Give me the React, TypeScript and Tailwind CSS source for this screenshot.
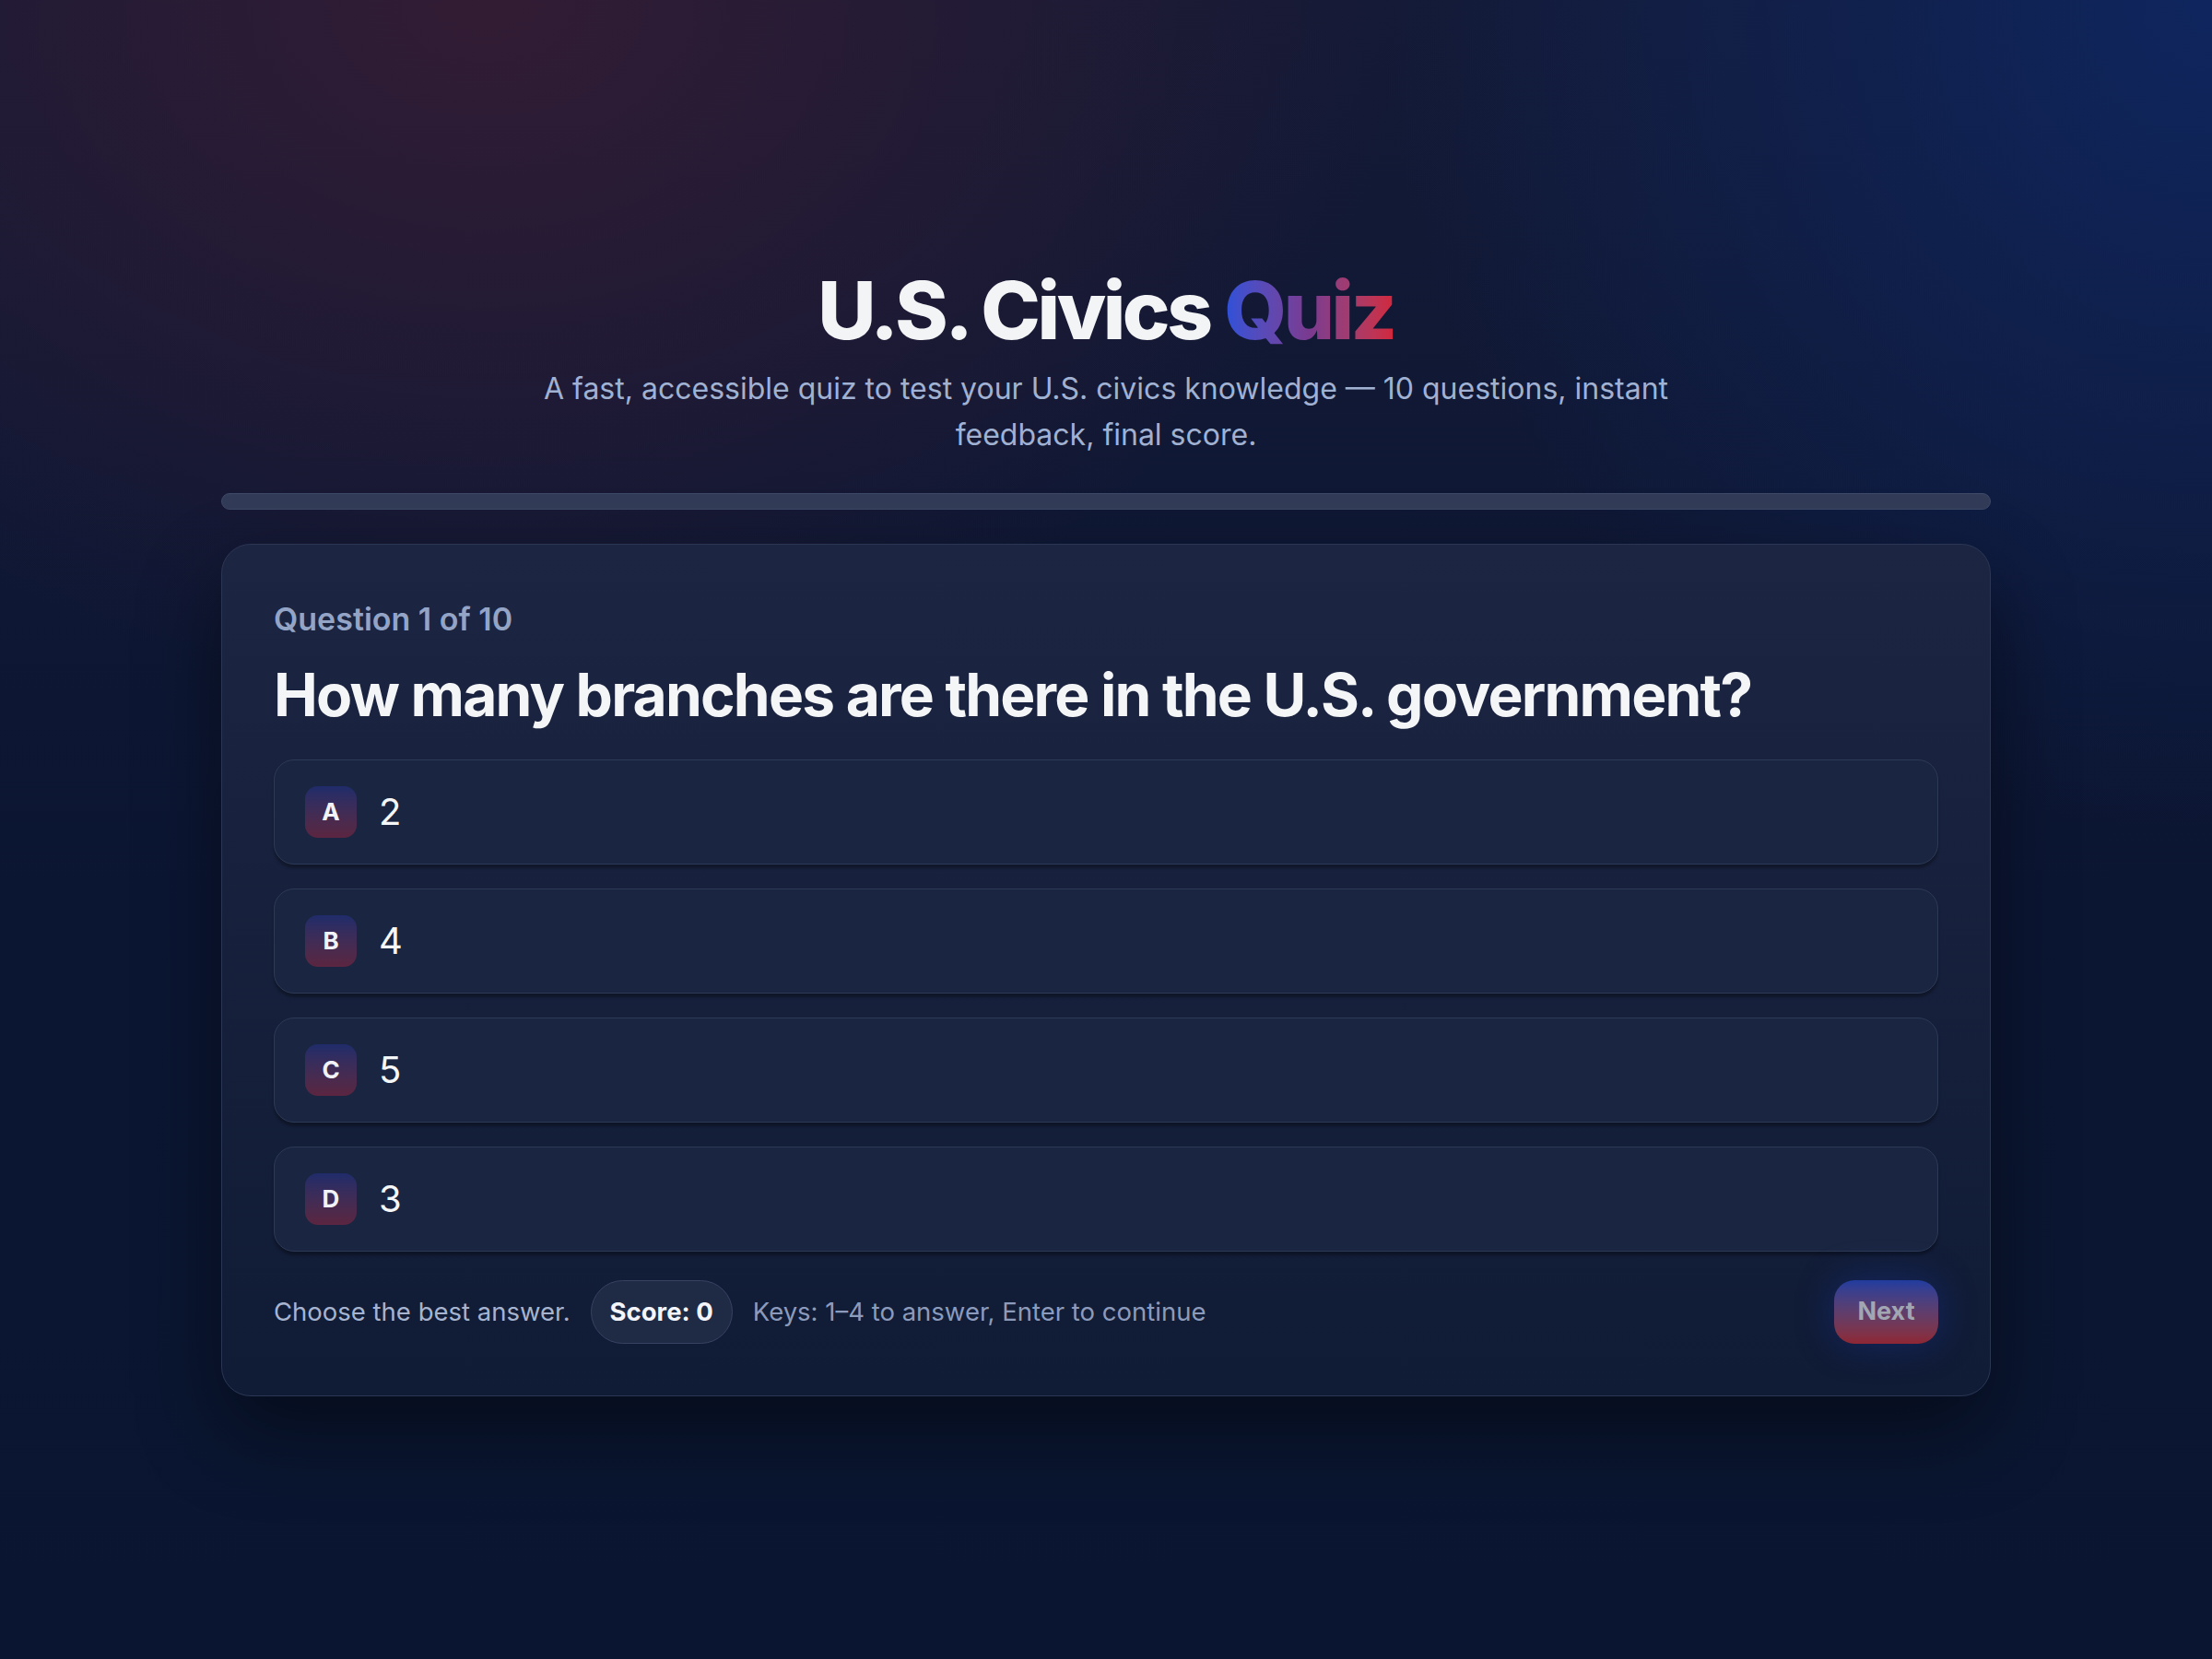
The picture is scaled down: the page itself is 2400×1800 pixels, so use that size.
import React from "react";

const options = [
  { k: "A", v: "2" },
  { k: "B", v: "4" },
  { k: "C", v: "5" },
  { k: "D", v: "3" },
];

export default function App() {
  return (
    <div
      className="min-h-screen w-full bg-[radial-gradient(ellipse_1000px_750px_at_22%_0%,rgba(52,28,52,0.95),rgba(52,28,52,0)_100%),radial-gradient(ellipse_900px_900px_at_100%_0%,rgba(14,38,96,0.95),rgba(14,38,96,0)_100%),linear-gradient(180deg,#141a36_0%,#0b1633_55%,#0a1631_100%)]"
      style={{ fontFamily: "Inter, 'Noto Sans', sans-serif" }}
    >
      <div className="mx-auto w-[1920px] pt-[289px] pb-[200px]">
        <header className="text-center">
          <h1 className="text-[87px] font-extrabold leading-[1.1] tracking-[-0.04em] text-[#f3f4f6]">
            U.S. Civics{" "}
            <span className="bg-gradient-to-r from-[#2b51da] via-[#7a3a90] to-[#d3263a] bg-clip-text text-transparent">
              Quiz
            </span>
          </h1>
          <p className="mx-auto mt-[12px] max-w-[1300px] text-[32px] leading-[50px] text-[#a0b1d2]">
            A fast, accessible quiz to test your U.S. civics knowledge — 10 questions, instant feedback, final score.
          </p>
        </header>

        <div className="mt-[38px] h-[18px] w-full rounded-full border border-[#3d4967] bg-[#323c58]" />

        <main className="mt-[37px] rounded-[32px] border border-[#2b3654] bg-gradient-to-b from-[#1c2542] to-[#101b35] p-[56px] shadow-[0_40px_90px_rgba(0,0,0,0.45)]">
          <div className="text-[34px] font-semibold leading-[50px] text-[#93a4c6]">Question 1 of 10</div>
          <h2 className="mt-[18px] text-[64px] font-bold leading-[77px] tracking-[-0.028em] text-[#f4f5f7]">
            How many branches are there in the U.S. government?
          </h2>

          <div className="mt-[32px] flex flex-col gap-[26px]">
            {options.map((o) => (
              <button
                key={o.k}
                className="flex h-[114px] w-full items-center gap-[24px] rounded-[22px] border border-[#2d3a57] bg-[#1a2641] px-[33px] text-left shadow-[0_4px_3px_rgba(0,0,0,0.3)]"
              >
                <span className="flex h-[56px] w-[56px] items-center justify-center rounded-[14px] bg-gradient-to-b from-[#1f2c6a] to-[#5b2540] text-[26px] font-bold text-[#f1f3f8]">
                  {o.k}
                </span>
                <span className="text-[40px] text-[#f5f6f8]">{o.v}</span>
              </button>
            ))}
          </div>

          <div className="mt-[31px] flex items-center justify-between">
            <div className="flex items-center gap-[22px] text-[27.5px]">
              <span className="text-[#a6b4cf]">Choose the best answer.</span>
              <span className="flex h-[69px] items-center rounded-full border border-[#364363] bg-[#1f2a45] px-[20px] font-bold text-[#f3f5fa]">
                Score: 0
              </span>
              <span className="text-[#8c9bbb]">Keys: 1–4 to answer, Enter to continue</span>
            </div>
            <button className="h-[69px] w-[113px] rounded-[22px] bg-gradient-to-b from-[#203c9e] to-[#8e2634] text-[27px] font-bold text-[#a2a6b3] shadow-[0_0_40px_rgba(25,55,170,0.4)]">
              Next
            </button>
          </div>
        </main>
      </div>
    </div>
  );
}
